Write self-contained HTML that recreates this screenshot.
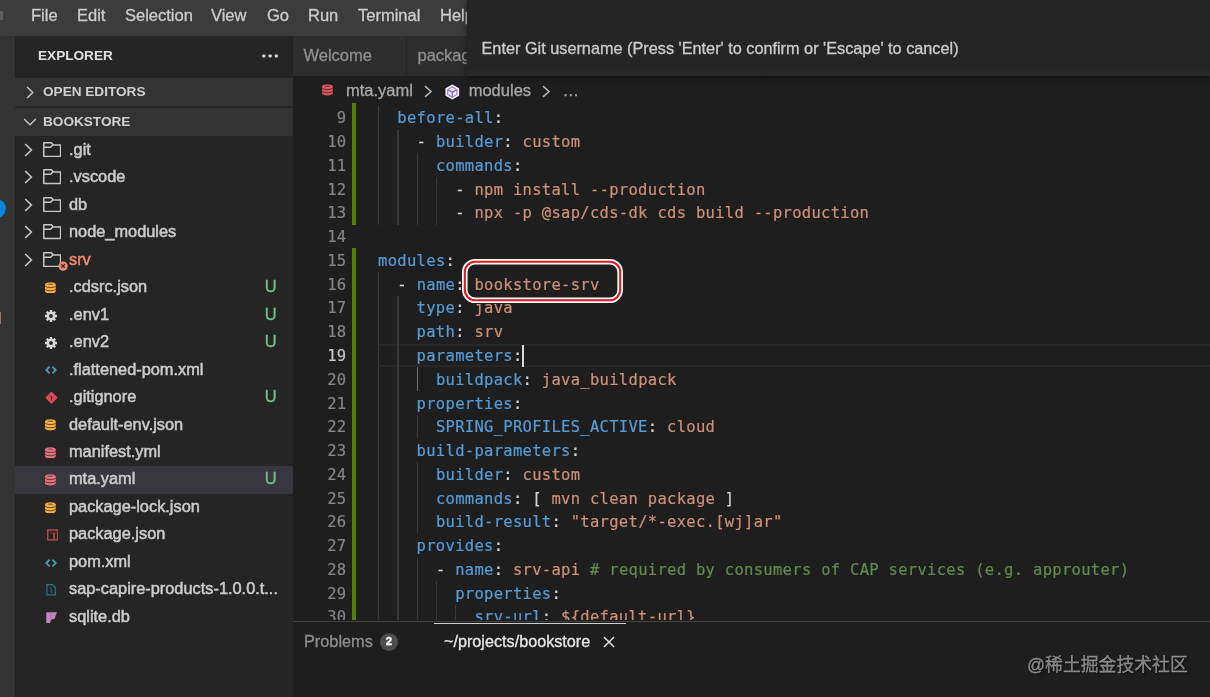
<!DOCTYPE html>
<html lang="en">
<head>
<meta charset="utf-8">
<title>mta.yaml - bookstore</title>
<style>
*{box-sizing:border-box;margin:0;padding:0}
html,body{width:1210px;height:697px;overflow:hidden;background:#1e1e1e}
body{filter:blur(0.4px);position:relative;-webkit-text-stroke:0.3px;font-family:"Liberation Sans",sans-serif;font-size:16.5px;color:#cccccc}
.abs{position:absolute}
#menubar{left:0;top:0;width:1210px;height:36px;background:#3c3c3c}
#menubar span{position:absolute;top:0;height:31px;line-height:31px;color:#cccccc;font-size:16.5px;white-space:nowrap}
#activity{left:0;top:36px;width:14.5px;height:661px;background:#333333}
#sidebar{left:14.5px;top:36px;width:278.5px;height:661px;background:#252526}
#sbhead{left:0;top:0;width:278.5px;height:42px}
#sbhead .t{-webkit-text-stroke:0;position:absolute;left:23.5px;top:0;line-height:40px;font-size:13.6px;color:#e0e0e0;font-weight:bold}
.sect{-webkit-text-stroke:0;position:absolute;left:0;width:278.5px;background:#333334;font-size:13.6px;font-weight:bold;color:#d0d0d0}
.sect .t{position:absolute;left:28.5px;top:0;line-height:28px}
.row{position:absolute;left:0;width:278.5px;height:27.5px}
.row .t{-webkit-text-stroke:0.5px;position:absolute;left:54.5px;top:0;line-height:26.5px;font-size:16.35px;color:#cccccc;white-space:nowrap}
.row .u{position:absolute;left:250.3px;top:0;line-height:26.5px;font-size:16.5px;color:#6ec28e}
.row svg{position:absolute}
.row.sel{background:#37373d}
#tabs{left:293px;top:36px;width:917px;height:40px;background:#252526}
.tab{position:absolute;top:0;height:40px;background:#2d2d2d;color:#8f8f8f;line-height:38px;font-size:16.5px;white-space:nowrap;overflow:hidden}
#crumbs{left:293px;top:76px;width:917px;height:27px;background:#1e1e1e;color:#a9a9a9;font-size:16.5px}
#crumbs span{position:absolute;top:0;line-height:29px;white-space:nowrap}
#editor{left:293px;top:103px;width:917px;height:516.7px;overflow:hidden;background:#1e1e1e}
.ln{-webkit-text-stroke:0.2px;position:absolute;left:0;width:917px;height:23.76px;font-family:"DejaVu Sans Mono","Liberation Mono",monospace;font-size:15.5px;letter-spacing:0.299px;line-height:23.76px;white-space:pre;color:#d4d4d4}
.ln .n{position:absolute;left:0;top:1px;width:53.5px;text-align:right;color:#858585}
.ln .c{position:absolute;left:0;top:1px}
.k{color:#569cd6}.s{color:#ce9178}.cm{color:#608b4e}
.g{position:absolute;width:1.3px;background:#383838}
.gb{position:absolute;left:59px;width:4px;background:#587c0c}
.ga{background:#707070}
.ln .na{color:#c6c6c6}
.cl{position:absolute;left:86px;width:831px;height:22.9px;border-top:2px solid #272727;border-bottom:2px solid #272727}
.cur{position:absolute;width:2px;height:22px;background:#d8d8d8}
.box{position:absolute;border:1.8px solid #fff;border-radius:13px}
.box>div{width:100%;height:100%;border:2px solid #de1a22;border-radius:11.2px}
.box>div>div{width:100%;height:100%;border:1.7px solid #fff;border-radius:9.2px}
.sect svg{position:absolute}
#quick{left:466.5px;top:0;width:744px;height:75.7px;background:linear-gradient(#252526 0,#252526 66px,#2a2a2b 75.7px);box-shadow:0 2px 6px rgba(0,0,0,.55)}
#quick span{position:absolute;left:15px;top:0;line-height:96px;font-size:16.27px;color:#cccccc;white-space:nowrap}
#panel{left:293px;top:621px;width:917px;height:76px;background:#1e1e1e;border-top:1px solid #414141}
#panel span{position:absolute;white-space:nowrap;font-size:16.5px}
#wm{left:1027px;top:651px;font-family:"Liberation Sans","Noto Sans CJK SC",sans-serif;font-size:17.83px;line-height:28px;color:rgba(170,170,170,.75);text-shadow:1px 1px 2px rgba(0,0,0,.8);white-space:nowrap}
</style>
</head>
<body>
<div id="menubar" class="abs"><div class="abs" style="left:0;top:11px;width:3px;height:9px;background:#5c5c5c"></div>
<span style="left:31px">File</span><span style="left:77px">Edit</span><span style="left:125px">Selection</span><span style="left:211px">View</span><span style="left:267px">Go</span><span style="left:308px">Run</span><span style="left:358px">Terminal</span><span style="left:440px">Help</span>
</div>
<div id="activity" class="abs"><div class="abs" style="left:-13px;top:163px;width:19px;height:19px;border-radius:50%;background:#0a84d8"></div><div class="abs" style="left:0;top:275.5px;width:1.3px;height:12px;background:#9a7868"></div></div>
<div id="sidebar" class="abs">
<div id="sbhead" class="abs"><span class="t">EXPLORER</span><svg class="abs" style="left:247px;top:18px" width="18" height="4" viewBox="0 0 18 4"><rect x=".2" y=".4" width="3.2" height="3.1" rx=".9" fill="#d4d4d4"/><rect x="6.5" y=".4" width="3.2" height="3.1" rx=".9" fill="#d4d4d4"/><rect x="12.7" y=".4" width="3.2" height="3.1" rx=".9" fill="#d4d4d4"/></svg></div>
<div class="sect" style="top:42px;height:28px"><svg style="left:11.6px;top:7.6px" width="8.2" height="13" viewBox="0 0 9 14"><path d="M1.2 1 L7.4 7 L1.2 13" fill="none" stroke="#c8c8c8" stroke-width="1.6"/></svg><span class="t">OPEN EDITORS</span></div>
<div class="sect" style="top:71.5px;height:28.5px"><svg style="position:absolute;left:8px;top:10px" width="14" height="9" viewBox="0 0 14 9"><path d="M1.2 1 L7 6.8 L12.8 1" fill="none" stroke="#c5c5c5" stroke-width="1.4"/></svg><span class="t">BOOKSTORE</span></div>
<div class="row" style="top:100.0px"><svg style="left:9px;top:6.6px" width="9" height="14" viewBox="0 0 9 14"><path d="M1.2 1 L7.4 7 L1.2 13" fill="none" stroke="#c8c8c8" stroke-width="1.6"/></svg><svg style="left:28.2px;top:5.9px" width="18.4" height="15.2" viewBox="0 0 18.4 15.2"><path d="M0.8 14.4 V0.8 H8.4 L10.4 3 H17.6 V14.4 Z M0.8 5.2 H7.6 L9.8 3" fill="none" stroke="#c8c8c8" stroke-width="1.5" stroke-linejoin="round"/></svg><span class="t" style="top:0.0px;">.git</span></div>
<div class="row" style="top:127.5px"><svg style="left:9px;top:6.6px" width="9" height="14" viewBox="0 0 9 14"><path d="M1.2 1 L7.4 7 L1.2 13" fill="none" stroke="#c8c8c8" stroke-width="1.6"/></svg><svg style="left:28.2px;top:5.9px" width="18.4" height="15.2" viewBox="0 0 18.4 15.2"><path d="M0.8 14.4 V0.8 H8.4 L10.4 3 H17.6 V14.4 Z M0.8 5.2 H7.6 L9.8 3" fill="none" stroke="#c8c8c8" stroke-width="1.5" stroke-linejoin="round"/></svg><span class="t" style="top:-0.5px;">.vscode</span></div>
<div class="row" style="top:155.0px"><svg style="left:9px;top:6.6px" width="9" height="14" viewBox="0 0 9 14"><path d="M1.2 1 L7.4 7 L1.2 13" fill="none" stroke="#c8c8c8" stroke-width="1.6"/></svg><svg style="left:28.2px;top:5.9px" width="18.4" height="15.2" viewBox="0 0 18.4 15.2"><path d="M0.8 14.4 V0.8 H8.4 L10.4 3 H17.6 V14.4 Z M0.8 5.2 H7.6 L9.8 3" fill="none" stroke="#c8c8c8" stroke-width="1.5" stroke-linejoin="round"/></svg><span class="t" style="top:0.0px;">db</span></div>
<div class="row" style="top:182.5px"><svg style="left:9px;top:6.6px" width="9" height="14" viewBox="0 0 9 14"><path d="M1.2 1 L7.4 7 L1.2 13" fill="none" stroke="#c8c8c8" stroke-width="1.6"/></svg><svg style="left:28.2px;top:5.9px" width="18.4" height="15.2" viewBox="0 0 18.4 15.2"><path d="M0.8 14.4 V0.8 H8.4 L10.4 3 H17.6 V14.4 Z M0.8 5.2 H7.6 L9.8 3" fill="none" stroke="#c8c8c8" stroke-width="1.5" stroke-linejoin="round"/></svg><span class="t" style="top:-0.5px;">node_modules</span></div>
<div class="row" style="top:210.0px"><svg style="left:9px;top:6.6px" width="9" height="14" viewBox="0 0 9 14"><path d="M1.2 1 L7.4 7 L1.2 13" fill="none" stroke="#c8c8c8" stroke-width="1.6"/></svg><svg style="left:28.2px;top:5.9px" width="18.4" height="15.2" viewBox="0 0 18.4 15.2"><path d="M0.8 14.4 V0.8 H8.4 L10.4 3 H17.6 V14.4 Z M0.8 5.2 H7.6 L9.8 3" fill="none" stroke="#c8c8c8" stroke-width="1.5" stroke-linejoin="round"/></svg><svg style="left:43.6px;top:14.6px" width="10.2" height="10.2" viewBox="0 0 10 10"><circle cx="5" cy="5" r="4.6" fill="#f48771"/><path d="M3.2 3.2 L6.8 6.8 M6.8 3.2 L3.2 6.8" stroke="#252526" stroke-width="1.1"/></svg><span class="t" style="top:0.0px;color:#f48771">srv</span></div>
<div class="row" style="top:237.5px"><svg style="left:30.3px;top:8.4px" width="10.8" height="11.6" viewBox="0 0 11 12"><path d="M0 2.4 C0 -0.5 11 -0.5 11 2.4 V9.6 C11 12.5 0 12.5 0 9.6 Z" fill="#fbaf3e"/><path d="M0.2 4.5 C2 6.2 9 6.2 10.8 4.5 M0.2 7.8 C2 9.5 9 9.5 10.8 7.8" stroke="#252526" stroke-width="1" opacity=".75" fill="none"/><ellipse cx="5.5" cy="2.3" rx="3.3" ry=".75" fill="#252526" opacity=".5"/></svg><span class="t" style="top:-0.5px;">.cdsrc.json</span><span class="u" style="top:-0.5px">U</span></div>
<div class="row" style="top:265.0px"><svg style="left:30.3px;top:8.6px" width="12" height="12" viewBox="0 0 12 12"><circle cx="6" cy="6" r="3.2" fill="none" stroke="#d8d8d8" stroke-width="2.6"/><g stroke="#d8d8d8" stroke-width="2.3"><path d="M6 0v2.2M6 9.8V12M0 6h2.2M9.8 6H12M1.7 1.7l1.6 1.6M8.7 8.7l1.6 1.6M1.7 10.3l1.6-1.6M8.7 3.3l1.6-1.6"/></g></svg><span class="t" style="top:0.0px;">.env1</span><span class="u" style="top:0.0px">U</span></div>
<div class="row" style="top:292.5px"><svg style="left:30.3px;top:8.6px" width="12" height="12" viewBox="0 0 12 12"><circle cx="6" cy="6" r="3.2" fill="none" stroke="#d8d8d8" stroke-width="2.6"/><g stroke="#d8d8d8" stroke-width="2.3"><path d="M6 0v2.2M6 9.8V12M0 6h2.2M9.8 6H12M1.7 1.7l1.6 1.6M8.7 8.7l1.6 1.6M1.7 10.3l1.6-1.6M8.7 3.3l1.6-1.6"/></g></svg><span class="t" style="top:-0.5px;">.env2</span><span class="u" style="top:-0.5px">U</span></div>
<div class="row" style="top:320.0px"><svg style="left:30.3px;top:10.4px" width="12" height="8" viewBox="0 0 12 8"><path d="M4.6 0.7 L1.3 4 L4.6 7.3 M7.4 0.7 L10.7 4 L7.4 7.3" fill="none" stroke="#4f9ea3" stroke-width="1.8"/></svg><span class="t" style="top:0.0px;">.flattened-pom.xml</span></div>
<div class="row" style="top:347.5px"><svg style="left:30.2px;top:7px" width="13" height="13.6" viewBox="0 0 13 13"><rect x="2.1" y="2.1" width="8.8" height="8.8" rx="1" transform="rotate(45 6.5 6.5)" fill="#dc4a58"/><path d="M5 4.2 L8 7.2 M6.4 5.6 V9.2" stroke="#5a2028" stroke-width="1" fill="none"/></svg><span class="t" style="top:-0.5px;">.gitignore</span><span class="u" style="top:-0.5px">U</span></div>
<div class="row" style="top:375.0px"><svg style="left:30.3px;top:8.4px" width="10.8" height="11.6" viewBox="0 0 11 12"><path d="M0 2.4 C0 -0.5 11 -0.5 11 2.4 V9.6 C11 12.5 0 12.5 0 9.6 Z" fill="#fbaf3e"/><path d="M0.2 4.5 C2 6.2 9 6.2 10.8 4.5 M0.2 7.8 C2 9.5 9 9.5 10.8 7.8" stroke="#252526" stroke-width="1" opacity=".75" fill="none"/><ellipse cx="5.5" cy="2.3" rx="3.3" ry=".75" fill="#252526" opacity=".5"/></svg><span class="t" style="top:0.0px;">default-env.json</span></div>
<div class="row" style="top:402.5px"><svg style="left:30.3px;top:8.4px" width="10.8" height="11.6" viewBox="0 0 11 12"><path d="M0 2.4 C0 -0.5 11 -0.5 11 2.4 V9.6 C11 12.5 0 12.5 0 9.6 Z" fill="#e8727c"/><path d="M0.2 4.5 C2 6.2 9 6.2 10.8 4.5 M0.2 7.8 C2 9.5 9 9.5 10.8 7.8" stroke="#252526" stroke-width="1" opacity=".75" fill="none"/><ellipse cx="5.5" cy="2.3" rx="3.3" ry=".75" fill="#252526" opacity=".5"/></svg><span class="t" style="top:-0.5px;">manifest.yml</span></div>
<div class="row sel" style="top:430.0px"><svg style="left:30.3px;top:8.4px" width="10.8" height="11.6" viewBox="0 0 11 12"><path d="M0 2.4 C0 -0.5 11 -0.5 11 2.4 V9.6 C11 12.5 0 12.5 0 9.6 Z" fill="#e8727c"/><path d="M0.2 4.5 C2 6.2 9 6.2 10.8 4.5 M0.2 7.8 C2 9.5 9 9.5 10.8 7.8" stroke="#252526" stroke-width="1" opacity=".75" fill="none"/><ellipse cx="5.5" cy="2.3" rx="3.3" ry=".75" fill="#252526" opacity=".5"/></svg><span class="t" style="top:-1.0px;">mta.yaml</span><span class="u" style="top:-1.0px">U</span></div>
<div class="row" style="top:457.5px"><svg style="left:30.3px;top:8.4px" width="10.8" height="11.6" viewBox="0 0 11 12"><path d="M0 2.4 C0 -0.5 11 -0.5 11 2.4 V9.6 C11 12.5 0 12.5 0 9.6 Z" fill="#fbaf3e"/><path d="M0.2 4.5 C2 6.2 9 6.2 10.8 4.5 M0.2 7.8 C2 9.5 9 9.5 10.8 7.8" stroke="#252526" stroke-width="1" opacity=".75" fill="none"/><ellipse cx="5.5" cy="2.3" rx="3.3" ry=".75" fill="#252526" opacity=".5"/></svg><span class="t" style="top:-0.5px;">package-lock.json</span></div>
<div class="row" style="top:485.0px"><svg style="left:32px;top:8.3px" width="11.4" height="11.8" viewBox="0 0 12 12"><rect x=".8" y=".8" width="10.4" height="10.4" fill="none" stroke="#b0484a" stroke-width="1.6"/><rect x="6.4" y="3.8" width="1.8" height="6.6" fill="#b0484a"/><rect x="3" y="3.4" width="6" height="1.2" fill="#b0484a" opacity=".6"/></svg><span class="t" style="top:-1.0px;">package.json</span></div>
<div class="row" style="top:512.5px"><svg style="left:30.3px;top:10.4px" width="12" height="8" viewBox="0 0 12 8"><path d="M4.6 0.7 L1.3 4 L4.6 7.3 M7.4 0.7 L10.7 4 L7.4 7.3" fill="none" stroke="#4f9ea3" stroke-width="1.8"/></svg><span class="t" style="top:-0.5px;">pom.xml</span></div>
<div class="row" style="top:540.0px"><svg style="left:31px;top:8.4px" width="10.2" height="11.6" viewBox="0 0 11 13"><path d="M.8 .8 H7 L10.2 4 V12.2 H.8 Z" fill="none" stroke="#32737e" stroke-width="1.4"/><path d="M5 4v1.5M6 5.5V7M5 7v1.5M6 8.5V10" stroke="#32737e" stroke-width="1.2"/></svg><span class="t" style="top:-1.0px;">sap-capire-products-1.0.0.t...</span></div>
<div class="row" style="top:567.5px"><svg style="left:31.5px;top:8.6px" width="11.2" height="11.2" viewBox="0 0 12 12"><path d="M0.3 0.3 H11.7 L9.2 7.2 L5.4 8.2 L4.2 11.7 H0.3 Z" fill="#c586c0"/><path d="M6.2 0.3 L4 8.4" stroke="#a060a0" stroke-width="1" opacity=".6"/></svg><span class="t" style="top:-0.5px;">sqlite.db</span></div>
</div>
<div id="tabs" class="abs">
<div class="tab" style="left:0;width:113px;padding-left:10.5px">Welcome</div>
<div class="tab" style="left:114px;width:200px;padding-left:10.5px">package.json</div>
</div>
<div id="crumbs" class="abs">
<svg class="abs" style="left:28.8px;top:8.4px" width="10.8" height="11.6" viewBox="0 0 11 12"><path d="M0 2.4 C0 -0.5 11 -0.5 11 2.4 V9.6 C11 12.5 0 12.5 0 9.6 Z" fill="#e2555e"/><path d="M0.2 4.5 C2 6.2 9 6.2 10.8 4.5 M0.2 7.8 C2 9.5 9 9.5 10.8 7.8" stroke="#1e1e1e" stroke-width="1" opacity=".75" fill="none"/><ellipse cx="5.5" cy="2.3" rx="3.3" ry=".75" fill="#1e1e1e" opacity=".5"/></svg>
<span style="left:53px">mta.yaml</span>
<svg class="abs" style="left:130.5px;top:8.5px" width="9" height="13" viewBox="0 0 9 13"><path d="M1 1.2 L7 6.5 L1 11.8" fill="none" stroke="#b4b4b4" stroke-width="1.6"/></svg>
<svg class="abs" style="left:152.3px;top:8px" width="14.6" height="16.2" viewBox="0 0 16 17"><path d="M8 0.3 L15.5 4.4 V12.6 L8 16.7 L0.5 12.4 V4.4 Z" fill="#f1ebfb"/><path d="M8 3 L13 5.8 V11.2 L8 14 L3 11.2 V5.8 Z" fill="#f6f1fd" stroke="#9b72d4" stroke-width="1.2" stroke-linejoin="round"/><path d="M3.6 6.2 L8 8.7 L12.4 6.2 M8 8.7 V13.8" fill="none" stroke="#8358c4" stroke-width="1.3"/></svg>
<span style="left:175.7px">modules</span>
<svg class="abs" style="left:248.5px;top:8.5px" width="9" height="13" viewBox="0 0 9 13"><path d="M1 1.2 L7 6.5 L1 11.8" fill="none" stroke="#b4b4b4" stroke-width="1.6"/></svg>
<span style="left:269.5px">…</span>
</div>
<div id="editor" class="abs">
<div class="gb" style="top:-1.60px;height:123.10px"></div>
<div class="gb" style="top:145.26px;height:403.92px"></div>
<div class="cl" style="top:241.20px"></div>
<div class="g" style="left:85.10px;top:2.80px;height:23.76px"></div>
<div class="ln" style="top:3.40px"><span class="n">9</span><span class="c" style="left:104.36px"><span class="k">before-all</span>:</span></div>
<div class="g" style="left:85.10px;top:26.56px;height:23.76px"></div>
<div class="g" style="left:104.36px;top:26.56px;height:23.76px"></div>
<div class="ln" style="top:27.16px"><span class="n">10</span><span class="c" style="left:123.62px">- <span class="k">builder</span>: <span class="s">custom</span></span></div>
<div class="g" style="left:85.10px;top:50.32px;height:23.76px"></div>
<div class="g" style="left:104.36px;top:50.32px;height:23.76px"></div>
<div class="g" style="left:123.62px;top:50.32px;height:23.76px"></div>
<div class="ln" style="top:50.92px"><span class="n">11</span><span class="c" style="left:142.88px"><span class="k">commands</span>:</span></div>
<div class="g" style="left:85.10px;top:74.08px;height:23.76px"></div>
<div class="g" style="left:104.36px;top:74.08px;height:23.76px"></div>
<div class="g" style="left:123.62px;top:74.08px;height:23.76px"></div>
<div class="g" style="left:142.88px;top:74.08px;height:23.76px"></div>
<div class="ln" style="top:74.68px"><span class="n">12</span><span class="c" style="left:162.14px">- <span class="s">npm install --production</span></span></div>
<div class="g" style="left:85.10px;top:97.84px;height:23.76px"></div>
<div class="g" style="left:104.36px;top:97.84px;height:23.76px"></div>
<div class="g" style="left:123.62px;top:97.84px;height:23.76px"></div>
<div class="g" style="left:142.88px;top:97.84px;height:23.76px"></div>
<div class="ln" style="top:98.44px"><span class="n">13</span><span class="c" style="left:162.14px">- <span class="s">npx -p @sap/cds-dk cds build --production</span></span></div>
<div class="ln" style="top:122.20px"><span class="n">14</span><span class="c" style="left:85.10px"></span></div>
<div class="ln" style="top:145.96px"><span class="n">15</span><span class="c" style="left:85.10px"><span class="k">modules</span>:</span></div>
<div class="g" style="left:85.10px;top:169.12px;height:23.76px"></div>
<div class="ln" style="top:169.72px"><span class="n">16</span><span class="c" style="left:104.36px">- <span class="k">name</span>: <span class="s">bookstore-srv</span></span></div>
<div class="g" style="left:85.10px;top:192.88px;height:23.76px"></div>
<div class="g" style="left:104.36px;top:192.88px;height:23.76px"></div>
<div class="ln" style="top:193.48px"><span class="n">17</span><span class="c" style="left:123.62px"><span class="k">type</span>: <span class="s">java</span></span></div>
<div class="g" style="left:85.10px;top:216.64px;height:23.76px"></div>
<div class="g" style="left:104.36px;top:216.64px;height:23.76px"></div>
<div class="ln" style="top:217.24px"><span class="n">18</span><span class="c" style="left:123.62px"><span class="k">path</span>: <span class="s">srv</span></span></div>
<div class="g" style="left:85.10px;top:240.40px;height:23.76px"></div>
<div class="g" style="left:104.36px;top:240.40px;height:23.76px"></div>
<div class="ln" style="top:241.00px"><span class="n na">19</span><span class="c" style="left:123.62px"><span class="k">parameters</span>:</span></div>
<div class="g" style="left:85.10px;top:264.16px;height:23.76px"></div>
<div class="g" style="left:104.36px;top:264.16px;height:23.76px"></div>
<div class="g ga" style="left:123.62px;top:264.16px;height:23.76px"></div>
<div class="ln" style="top:264.76px"><span class="n">20</span><span class="c" style="left:142.88px"><span class="k">buildpack</span>: <span class="s">java_buildpack</span></span></div>
<div class="g" style="left:85.10px;top:287.92px;height:23.76px"></div>
<div class="g" style="left:104.36px;top:287.92px;height:23.76px"></div>
<div class="ln" style="top:288.52px"><span class="n">21</span><span class="c" style="left:123.62px"><span class="k">properties</span>:</span></div>
<div class="g" style="left:85.10px;top:311.68px;height:23.76px"></div>
<div class="g" style="left:104.36px;top:311.68px;height:23.76px"></div>
<div class="g" style="left:123.62px;top:311.68px;height:23.76px"></div>
<div class="ln" style="top:312.28px"><span class="n">22</span><span class="c" style="left:142.88px"><span class="k">SPRING_PROFILES_ACTIVE</span>: <span class="s">cloud</span></span></div>
<div class="g" style="left:85.10px;top:335.44px;height:23.76px"></div>
<div class="g" style="left:104.36px;top:335.44px;height:23.76px"></div>
<div class="ln" style="top:336.04px"><span class="n">23</span><span class="c" style="left:123.62px"><span class="k">build-parameters</span>:</span></div>
<div class="g" style="left:85.10px;top:359.20px;height:23.76px"></div>
<div class="g" style="left:104.36px;top:359.20px;height:23.76px"></div>
<div class="g" style="left:123.62px;top:359.20px;height:23.76px"></div>
<div class="ln" style="top:359.80px"><span class="n">24</span><span class="c" style="left:142.88px"><span class="k">builder</span>: <span class="s">custom</span></span></div>
<div class="g" style="left:85.10px;top:382.96px;height:23.76px"></div>
<div class="g" style="left:104.36px;top:382.96px;height:23.76px"></div>
<div class="g" style="left:123.62px;top:382.96px;height:23.76px"></div>
<div class="ln" style="top:383.56px"><span class="n">25</span><span class="c" style="left:142.88px"><span class="k">commands</span>: [ <span class="s">mvn clean package</span> ]</span></div>
<div class="g" style="left:85.10px;top:406.72px;height:23.76px"></div>
<div class="g" style="left:104.36px;top:406.72px;height:23.76px"></div>
<div class="g" style="left:123.62px;top:406.72px;height:23.76px"></div>
<div class="ln" style="top:407.32px"><span class="n">26</span><span class="c" style="left:142.88px"><span class="k">build-result</span>: <span class="s">&quot;target/*-exec.[wj]ar&quot;</span></span></div>
<div class="g" style="left:85.10px;top:430.48px;height:23.76px"></div>
<div class="g" style="left:104.36px;top:430.48px;height:23.76px"></div>
<div class="ln" style="top:431.08px"><span class="n">27</span><span class="c" style="left:123.62px"><span class="k">provides</span>:</span></div>
<div class="g" style="left:85.10px;top:454.24px;height:23.76px"></div>
<div class="g" style="left:104.36px;top:454.24px;height:23.76px"></div>
<div class="g" style="left:123.62px;top:454.24px;height:23.76px"></div>
<div class="ln" style="top:454.84px"><span class="n">28</span><span class="c" style="left:142.88px">- <span class="k">name</span>: <span class="s">srv-api</span> <span class="cm"># required by consumers of CAP services (e.g. approuter)</span></span></div>
<div class="g" style="left:85.10px;top:478.00px;height:23.76px"></div>
<div class="g" style="left:104.36px;top:478.00px;height:23.76px"></div>
<div class="g" style="left:123.62px;top:478.00px;height:23.76px"></div>
<div class="g" style="left:142.88px;top:478.00px;height:23.76px"></div>
<div class="ln" style="top:478.60px"><span class="n">29</span><span class="c" style="left:162.14px"><span class="k">properties</span>:</span></div>
<div class="g" style="left:85.10px;top:501.76px;height:23.76px"></div>
<div class="g" style="left:104.36px;top:501.76px;height:23.76px"></div>
<div class="g" style="left:123.62px;top:501.76px;height:23.76px"></div>
<div class="g" style="left:142.88px;top:501.76px;height:23.76px"></div>
<div class="g" style="left:162.14px;top:501.76px;height:23.76px"></div>
<div class="ln" style="top:502.36px"><span class="n">30</span><span class="c" style="left:181.40px"><span class="k">srv-url</span>: <span class="s">${default-url}</span></span></div>
<div class="cur" style="left:228.55px;top:242.00px"></div>
<svg class="abs" style="left:168.8px;top:155.6px" width="161" height="44" viewBox="0 0 161 44"><rect x="2.8" y="2.8" width="155.4" height="38.4" rx="10.4" fill="none" stroke="#ffffff" stroke-width="5.6"/><rect x="2.8" y="2.8" width="155.4" height="38.4" rx="10.4" fill="none" stroke="#de1a22" stroke-width="2.1"/></svg>
</div>
<div id="panel" class="abs">
<div class="abs" style="left:140.5px;top:0.5px;width:192px;height:1.6px;background:#d0d0d0"></div>
<span style="left:11px;top:7px;color:#8f8f8f;line-height:24px;font-size:16.3px">Problems</span>
<div class="abs" style="left:87px;top:10.5px;width:18px;height:18px;border-radius:9px;background:#4d4d4d;color:#fff;font-size:11.5px;font-weight:bold;text-align:center;line-height:17px">2</div>
<span style="left:151px;top:7px;color:#e7e7e7;line-height:24px;font-size:16.2px">~/projects/bookstore</span>
<svg class="abs" style="left:309.5px;top:14px" width="12" height="12" viewBox="0 0 13 13"><path d="M1 1 L12 12 M12 1 L1 12" stroke="#e0e0e0" stroke-width="1.6" fill="none"/></svg>
</div>
<div id="quick" class="abs"><span>Enter Git username (Press 'Enter' to confirm or 'Escape' to cancel)</span></div>
<div id="wm" class="abs">@稀土掘金技术社区</div>
</body>
</html>
